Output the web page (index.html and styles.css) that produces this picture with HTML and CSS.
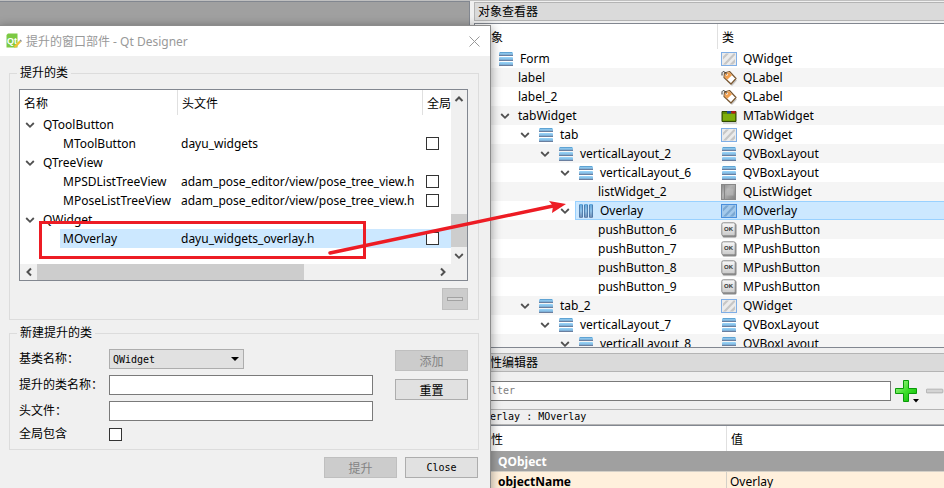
FILE: index.html
```html
<!DOCTYPE html>
<html lang="zh">
<head>
    <meta charset="UTF-8">
    <meta name="viewport" content="width=device-width, initial-scale=1.0">
    <title>提升的窗口部件 - Qt Designer</title>
    <link rel="stylesheet" href="styles.css">
</head>
<body>
    <!-- 图标定义 -->
    <svg class="icon-defs" width="0" height="0" aria-hidden="true">
        <defs>
            <linearGradient id="bar-v" x1="0" y1="0" x2="0" y2="1">
                <stop offset="0" stop-color="#9ad6fb"/>
                <stop offset="0.5" stop-color="#86bfe6"/>
                <stop offset="1" stop-color="#6f8cb0"/>
            </linearGradient>
            <linearGradient id="bar-h" x1="0" y1="0" x2="0" y2="1">
                <stop offset="0" stop-color="#5fa8de"/>
                <stop offset="0.5" stop-color="#8fc0e6"/>
                <stop offset="1" stop-color="#6c86ad"/>
            </linearGradient>
            <linearGradient id="book" x1="0" y1="0" x2="1" y2="1">
                <stop offset="0" stop-color="#8a8a8a"/>
                <stop offset="0.4" stop-color="#b4b4b4"/>
                <stop offset="1" stop-color="#808080"/>
            </linearGradient>
            <linearGradient id="ok" x1="0" y1="0" x2="0" y2="1">
                <stop offset="0" stop-color="#fafafa"/>
                <stop offset="1" stop-color="#c9c9c9"/>
            </linearGradient>
            <linearGradient id="green" x1="0" y1="0" x2="1" y2="1">
                <stop offset="0" stop-color="#b6f79c"/>
                <stop offset="0.5" stop-color="#3fe02c"/>
                <stop offset="1" stop-color="#05b800"/>
            </linearGradient>
            <symbol id="i-vbox" viewBox="0 0 16 16">
                <rect x="1" y="1" width="14" height="4" rx="1" fill="url(#bar-v)"/>
                <rect x="1" y="6" width="14" height="4" rx="1" fill="url(#bar-v)"/>
                <rect x="1" y="11" width="14" height="4" rx="1" fill="url(#bar-v)"/>
                <path d="M1 4.500H15M1 9.500H15M1 14.500H15" stroke="#6b7f9f"/>
                <path d="M2 1.500H14" stroke="#5fa3d3"/>
            </symbol>
            <symbol id="i-hbox" viewBox="0 0 16 16">
                <rect x="1" y="1" width="4" height="14" rx="1" fill="url(#bar-h)"/>
                <rect x="6" y="1" width="4" height="14" rx="1" fill="url(#bar-h)"/>
                <rect x="11" y="1" width="4" height="14" rx="1" fill="url(#bar-h)"/>
                <path d="M1.500 2V14M4.500 2V14M6.500 2V14M9.500 2V14M11.500 2V14M14.500 2V14" stroke="#4674a6" opacity="0.800"/>
            </symbol>
            <symbol id="i-widget" viewBox="0 0 16 16">
                <rect x="0.500" y="1.500" width="15" height="13" fill="#ebebeb" stroke="#7faee6"/>
                <path d="M2 8.500V5.500L5 2.500H8ZM2 13.500 12.500 2.500H14V4L5 13.500ZM8.500 13.500 14 8V11.500L12 13.500Z" fill="#c6c6c6"/>
            </symbol>
            <symbol id="i-widget-sel" viewBox="0 0 16 16">
                <rect x="0.500" y="1.500" width="15" height="13" fill="#a3c9eb" stroke="#4a8fdc"/>
                <path d="M2 8.500V5.500L5 2.500H8ZM2 13.500 12.500 2.500H14V4L5 13.500ZM8.500 13.500 14 8V11.500L12 13.500Z" fill="#7ba8d2"/>
            </symbol>
            <symbol id="i-label" viewBox="0 0 16 16">
                <path d="M6 11.500 11 16 16 10.500 14 9Z" fill="#999" opacity="0.500"/>
                <path d="M3.500 3 8.500 1.500 15 8.500 10 14 3 7.500Z" fill="#fff" stroke="#7a5730" stroke-width="1.200" stroke-linejoin="round"/>
                <path d="M4 3.500 8.200 2.200 11 5.200 6.200 9.800 3.600 7.200Z" fill="#f0a050"/>
                <circle cx="5.800" cy="4.800" r="1" fill="#fff"/>
                <path d="M5.500 4.500C4 0.800 1 0.800 1 3.500V5.500" fill="none" stroke="#333"/>
            </symbol>
            <symbol id="i-tab" viewBox="0 0 16 16">
                <path d="M1 3.500H15V13.500H1Z" fill="#5f8c00" stroke="#304800"/>
                <path d="M6 3H10V5.500H6Z" fill="#1d4c9c"/>
                <path d="M10.500 3H14.500V5.500H10.500Z" fill="#b81a1a"/>
                <path d="M2 6H14V12.500H2Z" fill="#7fae0a"/>
                <path d="M2 15H16" stroke="#aaa"/>
            </symbol>
            <symbol id="i-list" viewBox="0 0 16 16">
                <rect x="0.500" y="0.500" width="14" height="15" fill="url(#book)" stroke="#888"/>
                <path d="M3.500 1V15" stroke="#858585"/>
                <path d="M5.500 4.500H12.500V11.500H5.500Z" fill="#bcbcbc" opacity="0.600"/>
            </symbol>
            <symbol id="i-ok" viewBox="0 0 16 16">
                <rect x="1.500" y="1.500" width="14" height="14" rx="1.500" fill="#888"/>
                <rect x="0.800" y="0.800" width="13.400" height="13" rx="1.500" fill="url(#ok)" stroke="#8c8c8c"/>
                <text x="7.500" y="9" text-anchor="middle" font-size="6" font-weight="bold" font-family="Liberation Sans, sans-serif" fill="#333">OK</text>
            </symbol>
            <symbol id="i-down" viewBox="0 0 10 10">
                <path d="M1.200 3 5 6.800 8.800 3" fill="none" stroke="currentColor" stroke-width="1.800"/>
            </symbol>
            <symbol id="i-up" viewBox="0 0 10 10">
                <path d="M1.500 7 5 3.500 8.500 7" fill="none" stroke="currentColor" stroke-width="2"/>
            </symbol>
            <symbol id="i-left" viewBox="0 0 10 10">
                <path d="M7 1.500 3.500 5 7 8.500" fill="none" stroke="currentColor" stroke-width="2"/>
            </symbol>
            <symbol id="i-right" viewBox="0 0 10 10">
                <path d="M3 1.500 6.500 5 3 8.500" fill="none" stroke="currentColor" stroke-width="2"/>
            </symbol>
        </defs>
    </svg>

    <div class="main-window">
        <div class="workspace"></div>

        <div class="docks">
            <!-- 对象查看器 -->
            <section class="dock object-dock">
                <h2 class="dock-title">对象查看器</h2>
                <div class="tree-frame">
                    <table class="tree object-tree">
                        <colgroup><col class="col-object"><col></colgroup>
                        <thead>
                            <tr><th>对象</th><th>类</th></tr>
                        </thead>
                        <tbody>
                            <tr>
                                <td><div class="node"><span class="chevron"></span><span class="item"><svg class="icon"><use href="#i-vbox"/></svg>Form</span></div></td>
                                <td><span class="type"><svg class="icon"><use href="#i-widget"/></svg>QWidget</span></td>
                            </tr>
                            <tr>
                                <td><div class="node depth-1"><span class="chevron"></span><span class="item">label</span></div></td>
                                <td><span class="type"><svg class="icon"><use href="#i-label"/></svg>QLabel</span></td>
                            </tr>
                            <tr>
                                <td><div class="node depth-1"><span class="chevron"></span><span class="item">label_2</span></div></td>
                                <td><span class="type"><svg class="icon"><use href="#i-label"/></svg>QLabel</span></td>
                            </tr>
                            <tr>
                                <td><div class="node depth-1"><span class="chevron"><svg class="arrow"><use href="#i-down"/></svg></span><span class="item">tabWidget</span></div></td>
                                <td><span class="type"><svg class="icon"><use href="#i-tab"/></svg>MTabWidget</span></td>
                            </tr>
                            <tr>
                                <td><div class="node depth-2"><span class="chevron"><svg class="arrow"><use href="#i-down"/></svg></span><span class="item"><svg class="icon"><use href="#i-vbox"/></svg>tab</span></div></td>
                                <td><span class="type"><svg class="icon"><use href="#i-widget"/></svg>QWidget</span></td>
                            </tr>
                            <tr>
                                <td><div class="node depth-3"><span class="chevron"><svg class="arrow"><use href="#i-down"/></svg></span><span class="item"><svg class="icon"><use href="#i-vbox"/></svg>verticalLayout_2</span></div></td>
                                <td><span class="type"><svg class="icon"><use href="#i-vbox"/></svg>QVBoxLayout</span></td>
                            </tr>
                            <tr>
                                <td><div class="node depth-4"><span class="chevron"><svg class="arrow"><use href="#i-down"/></svg></span><span class="item"><svg class="icon"><use href="#i-vbox"/></svg>verticalLayout_6</span></div></td>
                                <td><span class="type"><svg class="icon"><use href="#i-vbox"/></svg>QVBoxLayout</span></td>
                            </tr>
                            <tr>
                                <td><div class="node depth-5"><span class="chevron"></span><span class="item">listWidget_2</span></div></td>
                                <td><span class="type"><svg class="icon"><use href="#i-list"/></svg>QListWidget</span></td>
                            </tr>
                            <tr class="selected">
                                <td><div class="node depth-4"><span class="chevron"><svg class="arrow"><use href="#i-down"/></svg></span><span class="item"><svg class="icon"><use href="#i-hbox"/></svg>Overlay</span></div></td>
                                <td><span class="type"><svg class="icon"><use href="#i-widget-sel"/></svg>MOverlay</span></td>
                            </tr>
                            <tr>
                                <td><div class="node depth-5"><span class="chevron"></span><span class="item">pushButton_6</span></div></td>
                                <td><span class="type"><svg class="icon"><use href="#i-ok"/></svg>MPushButton</span></td>
                            </tr>
                            <tr>
                                <td><div class="node depth-5"><span class="chevron"></span><span class="item">pushButton_7</span></div></td>
                                <td><span class="type"><svg class="icon"><use href="#i-ok"/></svg>MPushButton</span></td>
                            </tr>
                            <tr>
                                <td><div class="node depth-5"><span class="chevron"></span><span class="item">pushButton_8</span></div></td>
                                <td><span class="type"><svg class="icon"><use href="#i-ok"/></svg>MPushButton</span></td>
                            </tr>
                            <tr>
                                <td><div class="node depth-5"><span class="chevron"></span><span class="item">pushButton_9</span></div></td>
                                <td><span class="type"><svg class="icon"><use href="#i-ok"/></svg>MPushButton</span></td>
                            </tr>
                            <tr>
                                <td><div class="node depth-2"><span class="chevron"><svg class="arrow"><use href="#i-down"/></svg></span><span class="item"><svg class="icon"><use href="#i-vbox"/></svg>tab_2</span></div></td>
                                <td><span class="type"><svg class="icon"><use href="#i-widget"/></svg>QWidget</span></td>
                            </tr>
                            <tr>
                                <td><div class="node depth-3"><span class="chevron"><svg class="arrow"><use href="#i-down"/></svg></span><span class="item"><svg class="icon"><use href="#i-vbox"/></svg>verticalLayout_7</span></div></td>
                                <td><span class="type"><svg class="icon"><use href="#i-vbox"/></svg>QVBoxLayout</span></td>
                            </tr>
                            <tr>
                                <td><div class="node depth-4"><span class="chevron"><svg class="arrow"><use href="#i-down"/></svg></span><span class="item"><svg class="icon"><use href="#i-vbox"/></svg>verticalLayout_8</span></div></td>
                                <td><span class="type"><svg class="icon"><use href="#i-vbox"/></svg>QVBoxLayout</span></td>
                            </tr>
                        </tbody>
                    </table>
                </div>
            </section>

            <!-- 属性编辑器 -->
            <section class="dock property-dock">
                <h2 class="dock-title">属性编辑器</h2>
                <div class="filter-bar">
                    <input class="filter" type="text" placeholder="Filter" aria-label="Filter">
                    <button class="tool-button" type="button" aria-label="添加属性">
                        <svg width="25" height="24" viewBox="0 0 25 24">
                            <path d="M8.500 1.500H13.500V9.500H21.500V14.500H13.500V22.500H8.500V14.500H0.500V9.500H8.500Z" fill="url(#green)" stroke="#0a9a0a" stroke-linejoin="round"/>
                            <path d="M18 20H24L21 23.500Z" fill="#000"/>
                        </svg>
                    </button>
                    <button class="tool-button" type="button" aria-label="删除属性">
                        <svg width="24" height="24" viewBox="0 0 24 24">
                            <rect x="0.500" y="9.500" width="22" height="5" rx="1" fill="#d4d4d4" stroke="#a6a6a6"/>
                        </svg>
                    </button>
                </div>
                <div class="object-bar">Overlay : MOverlay</div>
                <div class="tree-frame">
                    <table class="tree property-tree">
                        <colgroup><col class="col-property"><col></colgroup>
                        <thead>
                            <tr><th>属性</th><th>值</th></tr>
                        </thead>
                        <tbody>
                            <tr class="group"><td>QObject</td><td></td></tr>
                            <tr><td class="name">objectName</td><td class="value">Overlay</td></tr>
                        </tbody>
                    </table>
                </div>
            </section>
        </div>
    </div>

    <!-- 提升的窗口部件对话框 -->
    <div class="dialog" role="dialog" aria-labelledby="dialog-title">
        <div class="title-bar">
            <svg class="icon" viewBox="0 0 16 16">
                <path d="M2 0.500H11.500V14.500H0.500V2Z" fill="#7cc943"/>
                <text x="1" y="10.500" font-size="9" font-weight="bold" font-family="Liberation Sans, sans-serif" fill="#fff">Qt</text>
                <path d="M8 15 8.500 12.500 13.500 7.500 15 9 10.500 14Z" fill="#f1c232"/>
                <path d="M13.500 7.500 14.500 6.500 16 8 15 9Z" fill="#8a8f94"/>
            </svg>
            <h1 id="dialog-title">提升的窗口部件 - Qt Designer</h1>
            <button class="close-x" type="button" aria-label="关闭">
                <svg width="11" height="11" viewBox="0 0 11 11"><path d="M0.500 0.500 10.500 10.500M10.500 0.500 0.500 10.500" stroke="#999" fill="none"/></svg>
            </button>
        </div>

        <form class="dialog-body">
            <fieldset class="group-box">
                <legend>提升的类</legend>
                <div class="class-tree">
                    <div class="class-view">
                        <table class="tree">
                            <colgroup><col class="col-name"><col class="col-header"><col></colgroup>
                            <thead>
                                <tr><th>名称</th><th>头文件</th><th>全局</th></tr>
                            </thead>
                            <tbody>
                                <tr>
                                    <td><div class="node"><span class="chevron"><svg class="arrow"><use href="#i-down"/></svg></span><span class="item">QToolButton</span></div></td>
                                    <td></td><td></td>
                                </tr>
                                <tr>
                                    <td><div class="node depth-1"><span class="chevron"></span><span class="item">MToolButton</span></div></td>
                                    <td>dayu_widgets</td>
                                    <td><input type="checkbox" aria-label="MToolButton 全局包含"></td>
                                </tr>
                                <tr>
                                    <td><div class="node"><span class="chevron"><svg class="arrow"><use href="#i-down"/></svg></span><span class="item">QTreeView</span></div></td>
                                    <td></td><td></td>
                                </tr>
                                <tr>
                                    <td><div class="node depth-1"><span class="chevron"></span><span class="item">MPSDListTreeView</span></div></td>
                                    <td>adam_pose_editor/view/pose_tree_view.h</td>
                                    <td><input type="checkbox" aria-label="MPSDListTreeView 全局包含"></td>
                                </tr>
                                <tr>
                                    <td><div class="node depth-1"><span class="chevron"></span><span class="item">MPoseListTreeView</span></div></td>
                                    <td>adam_pose_editor/view/pose_tree_view.h</td>
                                    <td><input type="checkbox" aria-label="MPoseListTreeView 全局包含"></td>
                                </tr>
                                <tr>
                                    <td><div class="node"><span class="chevron"><svg class="arrow"><use href="#i-down"/></svg></span><span class="item">QWidget</span></div></td>
                                    <td></td><td></td>
                                </tr>
                                <tr class="current">
                                    <td><div class="node depth-1"><span class="chevron"></span><span class="item">MOverlay</span></div></td>
                                    <td>dayu_widgets_overlay.h</td>
                                    <td><input type="checkbox" aria-label="MOverlay 全局包含"></td>
                                </tr>
                            </tbody>
                        </table>
                    </div>
                    <div class="scrollbar vertical">
                        <button type="button" aria-label="向上"><svg class="arrow"><use href="#i-up"/></svg></button>
                        <span class="track"></span>
                        <span class="thumb"></span>
                        <button type="button" aria-label="向下"><svg class="arrow"><use href="#i-down"/></svg></button>
                    </div>
                    <div class="scrollbar horizontal">
                        <button type="button" aria-label="向左"><svg class="arrow"><use href="#i-left"/></svg></button>
                        <span class="thumb"></span>
                        <span class="track"></span>
                        <button type="button" aria-label="向右"><svg class="arrow"><use href="#i-right"/></svg></button>
                    </div>
                </div>
                <button class="push-button remove" type="button" aria-label="删除" disabled>
                    <svg width="16" height="6" viewBox="0 0 16 6"><rect x="0.500" y="1.500" width="15" height="3" fill="#d6d6d6" stroke="#a2a2a2"/></svg>
                </button>
            </fieldset>

            <fieldset class="group-box new-class">
                <legend>新建提升的类</legend>
                <div class="columns">
                    <div class="fields">
                        <label for="base-class">基类名称：</label>
                        <span class="combo">
                            <select id="base-class"><option>QWidget</option></select>
                        </span>
                        <label for="class-name">提升的类名称：</label>
                        <input id="class-name" type="text">
                        <label for="header-file">头文件：</label>
                        <input id="header-file" type="text">
                        <label for="global-include">全局包含</label>
                        <input id="global-include" type="checkbox">
                    </div>
                    <div class="actions">
                        <button class="push-button" type="button" disabled>添加</button>
                        <button class="push-button" type="reset">重置</button>
                    </div>
                </div>
            </fieldset>

            <div class="dialog-buttons">
                <button class="push-button" type="button" disabled>提升</button>
                <button class="push-button" type="button">Close</button>
            </div>
        </form>
    </div>

    <!-- 红色标注 -->
    <svg class="annotation" width="580" height="280" viewBox="0 0 580 280" aria-hidden="true">
        <rect x="40.500" y="222.500" width="324" height="35" fill="none" stroke="#ed1c24" stroke-width="3"/>
        <path d="M330 253 553 206" stroke="#ed1c24" stroke-width="3.500" stroke-linecap="round"/>
        <path d="M566 204 549 201 553 206 552 213Z" fill="#ed1c24"/>
    </svg>
</body>
</html>
```

FILE: styles.css
```css
* {
    box-sizing: border-box;
}

body {
    margin: 0;
    height: 100vh;
    overflow: hidden;
    position: relative;
    background-color: #f0f0f0;
    color: #000;
    font-family: "Noto Sans", "Noto Sans CJK SC", sans-serif;
    font-size: 12px;
}

h1, h2 {
    margin: 0;
    font-size: 12px;
    font-weight: normal;
}

button, input, select {
    font-family: "DejaVu Sans Mono", "Noto Sans CJK SC", monospace;
    font-size: 10px;
    margin: 0;
    border-radius: 0;
}

.icon-defs {
    position: absolute;
}

.icon {
    flex: none;
    width: 16px;
    height: 16px;
}

.arrow {
    width: 10px;
    height: 10px;
    color: #505050;
}

/* 主窗口 */
.main-window {
    display: flex;
    height: 100%;
    border-top: 1px solid #c0c0c0;
}

.workspace {
    flex: none;
    width: 470px;
    background-color: #a0a0a0;
    border-top: 1px solid #828790;
    border-right: 1px solid #828790;
}

.docks {
    flex: 1;
    min-width: 0;
    display: flex;
    flex-direction: column;
    gap: 5px;
    padding: 1px 0 0 4px;
}

.dock {
    display: flex;
    flex-direction: column;
    min-height: 0;
}

/* 分隔条位置 */
.object-dock {
    flex: 0 0 346px;
}

.property-dock {
    flex: 1;
}

.dock-title {
    flex: none;
    height: 19px;
    line-height: 17px;
    padding-left: 3px;
    background-color: #dadada;
    border: 1px solid #b4b4b4;
    border-right: none;
}

.tree-frame {
    flex: 1;
    min-height: 0;
    overflow: hidden;
    background-color: #fff;
    border: 1px solid #828790;
    border-right: none;
}

.object-dock .tree-frame {
    margin-top: 2px;
}

.property-dock .tree-frame {
    border-bottom: none;
}

/* 树形表格 */
.tree {
    width: 100%;
    table-layout: fixed;
    border-collapse: separate;
    border-spacing: 0;
}

.tree th {
    height: 25px;
    padding: 0 0 0 4px;
    font-weight: normal;
    text-align: left;
    white-space: nowrap;
    overflow: hidden;
    border-right: 1px solid #e0e0e0;
}

.tree th:last-child {
    border-right: none;
}

.tree td {
    height: 19px;
    padding: 0 0 0 3px;
    line-height: 19px;
    white-space: nowrap;
}

.tree td:first-child {
    padding-left: 0;
}

.col-object {
    width: 243px;
}

.object-tree tbody tr:nth-child(even) {
    background-color: #f5f5f5;
}

.node, .item, .type {
    display: flex;
    align-items: center;
    height: 19px;
}

.depth-1 { padding-left: 20px; }
.depth-2 { padding-left: 40px; }
.depth-3 { padding-left: 60px; }
.depth-4 { padding-left: 80px; }
.depth-5 { padding-left: 100px; }

.chevron {
    flex: none;
    display: flex;
    justify-content: center;
    width: 20px;
}

.item {
    flex: 1;
    padding-left: 3px;
}

.item, .type {
    gap: 6px;
}

.selected .item {
    background-color: #cce8ff;
    border: 1px solid #99d1ff;
    border-right: none;
    padding-left: 2px;
}

.selected td:last-child {
    background-color: #cce8ff;
    border-top: 1px solid #99d1ff;
    border-bottom: 1px solid #99d1ff;
}

.selected .type {
    height: 17px;
}

/* 属性编辑器 */
.filter-bar {
    flex: none;
    display: flex;
    align-items: center;
    gap: 4px;
    height: 37px;
    overflow: hidden;
}

.filter {
    flex: 1;
    min-width: 0;
    height: 20px;
    padding: 0 4px;
    border: 1px solid #7a7a7a;
}

.filter::placeholder {
    color: #808080;
}

.tool-button {
    flex: none;
    display: flex;
    padding: 0;
    border: none;
    background: none;
}

.tool-button:last-child {
    width: 18px;
    margin-left: 2px;
}

.object-bar {
    flex: none;
    height: 16px;
    padding-left: 3px;
    line-height: 14px;
    border: 1px solid #b4b4b4;
    border-right: none;
    font-family: "DejaVu Sans Mono", monospace;
    font-size: 10px;
}

.col-property {
    width: 252px;
}

.property-tree .group td {
    height: 20px;
    background-color: #a0a0a0;
    color: #fff;
    font-weight: bold;
}

.property-tree tbody td:first-child {
    padding-left: 23px;
}

.property-tree .name, .property-tree .value {
    height: 20px;
    background-color: #fff0dc;
    border-top: 1px solid #d4d0c8;
}

.property-tree .name {
    font-weight: bold;
    border-right: 1px solid #d4d0c8;
}

/* 对话框 */
.dialog {
    position: absolute;
    top: 25px;
    left: -1px;
    bottom: -10px;
    width: 492px;
    background-color: #f0f0f0;
    border: 1px solid #8c8c8c;
    box-shadow: 0 2px 10px rgba(0, 0, 0, 0.4);
}

.title-bar {
    display: flex;
    align-items: center;
    gap: 4px;
    height: 30px;
    padding: 0 10px 0 6px;
    background-color: #fff;
    color: #999;
}

.title-bar h1 {
    flex: 1;
}

.close-x {
    display: flex;
    padding: 0;
    border: none;
    background: none;
}

.dialog-body {
    padding: 8px 11px 0 9px;
}

.group-box {
    min-width: 0;
    margin: 0 0 4px;
    padding: 7px 10px 9px 9px;
    border: 1px solid #dcdcdc;
}

.group-box legend {
    margin-left: -2px;
    padding: 0 3px;
    line-height: 18px;
}

.class-tree {
    display: grid;
    grid-template-columns: 1fr 16px;
    border: 1px solid #828790;
    background-color: #f0f0f0;
}

.class-view {
    min-width: 0;
    overflow: hidden;
    padding-bottom: 16px;
    background-color: #fff;
}

.col-name {
    width: 158px;
}

.col-header {
    width: 245px;
}

.current .item, .current td + td {
    background-color: #cce8ff;
}

input[type="checkbox"] {
    appearance: none;
    display: block;
    width: 13px;
    height: 13px;
    background-color: #fff;
    border: 1px solid #333;
}

.scrollbar {
    display: flex;
}

.scrollbar.vertical {
    flex-direction: column;
}

.scrollbar button {
    flex: none;
    display: flex;
    align-items: center;
    justify-content: center;
    width: 16px;
    height: 17px;
    padding: 0;
    border: none;
    background: none;
}

.scrollbar .track {
    flex: 1;
}

.scrollbar .thumb {
    background-color: #cdcdcd;
}

.vertical .thumb {
    height: 33px;
}

.scrollbar.horizontal button {
    width: 17px;
    height: 16px;
}

.horizontal .thumb {
    width: 62%;
}

.push-button {
    width: 73px;
    height: 21px;
    padding: 0;
    color: #000;
    background-color: #e1e1e1;
    border: 1px solid #adadad;
    font-size: 12px;
}

.push-button:disabled {
    color: #838383;
    background-color: #ccc;
    border-color: #bfbfbf;
}

.remove {
    display: flex;
    align-items: center;
    justify-content: center;
    width: 26px;
    height: 22px;
    margin: 7px 0 0 auto;
}

.new-class {
    padding-bottom: 8px;
}

.columns {
    display: flex;
    align-items: flex-start;
    gap: 22px;
}

.fields {
    flex: 1;
    display: grid;
    grid-template-columns: 90px 1fr;
    row-gap: 6px;
    align-items: center;
}

.fields label {
    line-height: 14px;
    white-space: nowrap;
}

.fields input[type="text"] {
    width: 100%;
    height: 20px;
    border: 1px solid #7a7a7a;
}

.combo {
    position: relative;
    width: 135px;
    height: 20px;
}

.combo select {
    appearance: none;
    display: block;
    width: 100%;
    height: 20px;
    padding: 0 3px;
    color: #000;
    background-color: #e1e1e1;
    border: 1px solid #adadad;
}

.combo::after {
    content: "";
    position: absolute;
    top: 8px;
    right: 5px;
    border: 4px solid transparent;
    border-top-color: #000;
    border-bottom: none;
}

.actions {
    display: flex;
    flex-direction: column;
    gap: 8px;
    padding-top: 1px;
}

.dialog-buttons {
    display: flex;
    justify-content: flex-end;
    gap: 8px;
    padding: 3px 1px 0 0;
}

.dialog-buttons .push-button:last-child {
    font-size: 10px;
}

/* 标注 */
.annotation {
    position: absolute;
    top: 0;
    left: 0;
    pointer-events: none;
}
```
